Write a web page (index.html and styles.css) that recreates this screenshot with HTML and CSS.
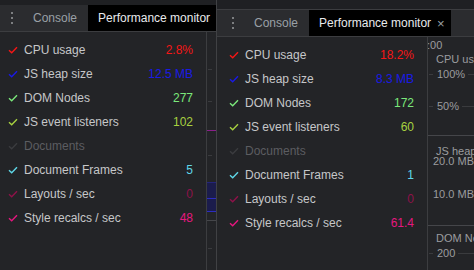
FILE: index.html
```html
<!DOCTYPE html>
<html lang="en">
<head>
    <meta charset="UTF-8">
    <title>Performance monitor</title>
    <link rel="stylesheet" href="styles.css">
</head>
<body>

<section class="panel panel-back">
    <div class="strip"></div>
    <div class="tabbar">
        <div class="dots"><i></i><i></i><i></i></div>
        <div class="tab">Console</div>
        <div class="tab active">Performance monitor</div>
    </div>
    <div class="body">
        <div class="metrics">
            <div class="metric cpu"><svg viewBox="0 0 10 8"><path d="M1 4.2 L3.7 6.8 L9 1.2"/></svg><span class="label">CPU usage</span><span class="value">2.8%</span></div>
            <div class="metric heap"><svg viewBox="0 0 10 8"><path d="M1 4.2 L3.7 6.8 L9 1.2"/></svg><span class="label">JS heap size</span><span class="value">12.5 MB</span></div>
            <div class="metric dom"><svg viewBox="0 0 10 8"><path d="M1 4.2 L3.7 6.8 L9 1.2"/></svg><span class="label">DOM Nodes</span><span class="value">277</span></div>
            <div class="metric listeners"><svg viewBox="0 0 10 8"><path d="M1 4.2 L3.7 6.8 L9 1.2"/></svg><span class="label">JS event listeners</span><span class="value">102</span></div>
            <div class="metric docs"><svg viewBox="0 0 10 8"><path d="M1 4.2 L3.7 6.8 L9 1.2"/></svg><span class="label">Documents</span><span class="value"></span></div>
            <div class="metric frames"><svg viewBox="0 0 10 8"><path d="M1 4.2 L3.7 6.8 L9 1.2"/></svg><span class="label">Document Frames</span><span class="value">5</span></div>
            <div class="metric layouts"><svg viewBox="0 0 10 8"><path d="M1 4.2 L3.7 6.8 L9 1.2"/></svg><span class="label">Layouts / sec</span><span class="value">0</span></div>
            <div class="metric recalcs"><svg viewBox="0 0 10 8"><path d="M1 4.2 L3.7 6.8 L9 1.2"/></svg><span class="label">Style recalcs / sec</span><span class="value">48</span></div>
        </div>
        <div class="chart">
            <div class="sec sec-cpu">
                <div class="blank"></div>
                <div class="grid grid-first"></div>
                <div class="grid grid-low"></div>
            </div>
            <div class="sec sec-heap">
                <div class="fill"></div>
                <div class="blank"></div>
                <div class="grid grid-top"></div>
                <div class="grid grid-low"></div>
            </div>
            <div class="sec sec-dom">
                <div class="blank"></div>
                <div class="grid grid-dom"></div>
            </div>
        </div>
    </div>
</section>

<section class="panel panel-front">
    <div class="strip"></div>
    <div class="tabbar">
        <div class="dots"><i></i><i></i><i></i></div>
        <div class="tab">Console</div>
        <div class="tab active">Performance monitor<span class="close">×</span></div>
    </div>
    <div class="body">
        <div class="metrics">
            <div class="metric cpu"><svg viewBox="0 0 10 8"><path d="M1 4.2 L3.7 6.8 L9 1.2"/></svg><span class="label">CPU usage</span><span class="value">18.2%</span></div>
            <div class="metric heap"><svg viewBox="0 0 10 8"><path d="M1 4.2 L3.7 6.8 L9 1.2"/></svg><span class="label">JS heap size</span><span class="value">8.3 MB</span></div>
            <div class="metric dom"><svg viewBox="0 0 10 8"><path d="M1 4.2 L3.7 6.8 L9 1.2"/></svg><span class="label">DOM Nodes</span><span class="value">172</span></div>
            <div class="metric listeners"><svg viewBox="0 0 10 8"><path d="M1 4.2 L3.7 6.8 L9 1.2"/></svg><span class="label">JS event listeners</span><span class="value">60</span></div>
            <div class="metric docs"><svg viewBox="0 0 10 8"><path d="M1 4.2 L3.7 6.8 L9 1.2"/></svg><span class="label">Documents</span><span class="value"></span></div>
            <div class="metric frames"><svg viewBox="0 0 10 8"><path d="M1 4.2 L3.7 6.8 L9 1.2"/></svg><span class="label">Document Frames</span><span class="value">1</span></div>
            <div class="metric layouts"><svg viewBox="0 0 10 8"><path d="M1 4.2 L3.7 6.8 L9 1.2"/></svg><span class="label">Layouts / sec</span><span class="value">0</span></div>
            <div class="metric recalcs"><svg viewBox="0 0 10 8"><path d="M1 4.2 L3.7 6.8 L9 1.2"/></svg><span class="label">Style recalcs / sec</span><span class="value">61.4</span></div>
        </div>
        <div class="chart">
            <div class="sec sec-cpu">
                <div class="time">:00</div>
                <div class="title">CPU usage</div>
                <div class="grid">100%</div>
                <div class="grid grid-low">50%</div>
            </div>
            <div class="sec sec-heap">
                <div class="title">JS heap size</div>
                <div class="grid grid-top">20.0 MB</div>
                <div class="grid grid-low">10.0 MB</div>
            </div>
            <div class="sec sec-dom">
                <div class="title">DOM Nodes</div>
                <div class="grid grid-dom">200</div>
            </div>
        </div>
    </div>
</section>

</body>
</html>
```

FILE: styles.css
```css
* {
    box-sizing: border-box;
}
body {
    margin: 0;
    width: 474px;
    height: 270px;
    overflow: hidden;
    position: relative;
    background-color: #202124;
    font-family: "Liberation Sans", Arial, sans-serif;
    font-size: 12px;
}

/* the two devtools windows overlap like on a desktop */
.panel {
    position: absolute;
    top: 0;
    bottom: 0;
    display: flex;
    flex-direction: column;
    overflow: hidden;
    background-color: #232427;
    border-left: 1px solid #404144;
}
.panel-back {
    left: -5px;
    width: 222px;
}
.panel-front {
    left: 216px;
    right: 0;
}
.strip {
    flex: none;
    background-color: #1f2023;
}
.panel-back .strip {
    height: 5px;
}
.panel-front .strip {
    height: 10px;
    border-bottom: 1px solid #3c3d40;
}

.tabbar {
    flex: none;
    height: 27px;
    display: flex;
    background-color: #2b2c2f;
    border-bottom: 1px solid #3c3d40;
    white-space: nowrap;
}
.panel-back .tabbar {
    background: linear-gradient(to right, #2b2c2f 92px, #000 92px);
}
.dots {
    width: 27px;
    padding-left: 15px;
    display: flex;
    flex-direction: column;
    justify-content: center;
    gap: 3px;
}
.dots i {
    display: block;
    width: 2px;
    height: 2px;
    border-radius: 1px;
    background-color: #9a9b9e;
}
.tab {
    display: flex;
    align-items: center;
    padding: 0 11px 0 10px;
    color: #9aa0a6;
}
.tab.active {
    padding: 0 6px 0 10px;
    background-color: #000;
    color: #e8eaed;
}
.close {
    margin-left: 6px;
    font-size: 13px;
    color: #9aa0a6;
}

.body {
    flex: 1;
    display: flex;
    min-height: 0;
}
.metrics {
    flex: none;
    width: 210px;
    padding-top: 6px;
}
.metric {
    height: 24px;
    display: flex;
    align-items: center;
    padding: 0 13px 0 12px;
}
.metric svg {
    width: 10px;
    height: 8px;
    margin-right: 6px;
    fill: none;
    stroke: currentColor;
    stroke-width: 1.4;
}
.metric .label {
    flex: 1;
    color: #c6c7c9;
}
.cpu { color: #f51616; }
.heap { color: #1a1ae6; }
.dom { color: #7be87b; }
.listeners { color: #a7d140; }
.docs { color: #3b3c3f; }
.docs .label { color: #5c5d61; }
.frames { color: #5fd7e7; }
.layouts { color: #8e1249; }
.recalcs { color: #e5177f; }

.chart {
    flex: 1;
    display: flex;
    flex-direction: column;
    border-left: 1px solid #3c3d40;
    overflow: hidden;
    font-size: 11px;
    color: #9b9c9f;
    white-space: nowrap;
}
.sec {
    flex: none;
    border-bottom: 1px solid #45464a;
    position: relative;
}
.sec-cpu {
    height: 99px;
}
.panel-back .sec-cpu {
    border-bottom-color: #8a1f8a;
}
.sec-heap {
    height: 90px;
}
.sec-dom {
    flex: 1;
    border-bottom: none;
}
.time {
    height: 10px;
    line-height: 10px;
    margin: 3px 0 0 -1px;
}
.title {
    height: 10px;
    line-height: 10px;
    margin: 4px 0 0 8px;
}
.sec-heap .title {
    margin-top: 10px;
}
.sec-dom .title {
    margin-top: 7px;
}
.blank {
    height: 27px;
}
.sec-heap .blank {
    height: 19px;
}
.sec-dom .blank {
    height: 17px;
}
.grid {
    height: 10px;
    display: flex;
    align-items: center;
    gap: 3px;
    margin-top: 5px;
}
.grid::before,
.grid::after {
    content: "";
    height: 1px;
    background-color: #3a3b3e;
}
.grid::before {
    width: 4px;
    margin: 0 1px;
}
.grid::after {
    flex: 1;
}
.grid-first {
    margin-top: 5px;
}
.grid-low {
    margin-top: 22px;
}
.sec-heap .grid-top {
    margin-top: 0;
}
.sec-heap .grid-low {
    margin-top: 23px;
}
.grid-dom {
    margin-top: 5px;
}

/* heap area drawn in the back window chart */
.fill {
    position: absolute;
    top: 51px;
    left: 0;
    right: 0;
    height: 30px;
    background-color: #1b1c4c;
    border-top: 1px solid #24247a;
    border-bottom: 1px solid #2c2cc0;
}
.fill::after {
    content: "";
    position: absolute;
    top: 15px;
    left: 0;
    right: 0;
    height: 1px;
    background-color: #2c2cc0;
}
```
